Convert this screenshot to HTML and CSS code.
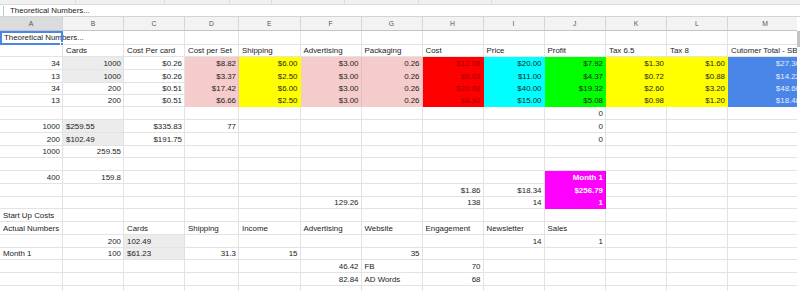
FILE: index.html
```html
<!DOCTYPE html>
<html>
<head>
<meta charset="utf-8">
<link rel="stylesheet" href="styles.css">
</head>
<body>
<div class="toolbar"><span style="width:75px"></span><span style="width:88px"></span><span style="width:64px"></span><span style="width:41px"></span><span style="width:72px"></span><span style="width:73px"></span><span style="width:72px"></span></div>
<div class="fbar"><span class="fx"></span><span class="ftext">Theoretical Numbers...</span></div>
<table class="sheet">
<colgroup>
<col style="width:63px"><col style="width:61px"><col style="width:61px"><col style="width:54px"><col style="width:61.5px"><col style="width:61px"><col style="width:61px"><col style="width:61px"><col style="width:61px"><col style="width:61.5px"><col style="width:61px"><col style="width:61px"><col style="width:75px">
</colgroup>
<thead>
<tr class="hdr"><th class="hsel">A</th><th>B</th><th>C</th><th>D</th><th>E</th><th>F</th><th>G</th><th>H</th><th>I</th><th>J</th><th>K</th><th>L</th><th>M</th></tr>
</thead>
<tbody>
<tr class="h14"><td class="sel">Theoretical Numbers...</td><td></td><td></td><td></td><td></td><td></td><td></td><td></td><td></td><td></td><td></td><td></td><td></td></tr>
<tr class="h12"><td></td><td>Cards</td><td>Cost Per card</td><td>Cost per Set</td><td>Shipping</td><td>Advertising</td><td>Packaging</td><td>Cost</td><td>Price</td><td>Profit</td><td>Tax 6.5</td><td>Tax 8</td><td>Cutomer Total - SB</td></tr>
<tr class="h13"><td class="n">34</td><td class="n gr">1000</td><td class="n">$0.26</td><td class="n pk">$8.82</td><td class="n yl">$6.00</td><td class="n pk">$3.00</td><td class="n pk">0.26</td><td class="n rd">$12.08</td><td class="n cy">$20.00</td><td class="n gn">$7.92</td><td class="n yl">$1.30</td><td class="n yl">$1.60</td><td class="n bl">$27.30</td></tr>
<tr class="h13"><td class="n">13</td><td class="n gr">1000</td><td class="n">$0.26</td><td class="n pk">$3.37</td><td class="n yl">$2.50</td><td class="n pk">$3.00</td><td class="n pk">0.26</td><td class="n rd">$6.63</td><td class="n cy">$11.00</td><td class="n gn">$4.37</td><td class="n yl">$0.72</td><td class="n yl">$0.88</td><td class="n bl">$14.22</td></tr>
<tr class="h12"><td class="n">34</td><td class="n">200</td><td class="n">$0.51</td><td class="n pk">$17.42</td><td class="n yl">$6.00</td><td class="n pk">$3.00</td><td class="n pk">0.26</td><td class="n rd">$20.68</td><td class="n cy">$40.00</td><td class="n gn">$19.32</td><td class="n yl">$2.60</td><td class="n yl">$3.20</td><td class="n bl">$48.60</td></tr>
<tr class="h12"><td class="n">13</td><td class="n">200</td><td class="n">$0.51</td><td class="n pk">$6.66</td><td class="n yl">$2.50</td><td class="n pk">$3.00</td><td class="n pk">0.26</td><td class="n rd">$8.92</td><td class="n cy">$15.00</td><td class="n gn">$5.08</td><td class="n yl">$0.98</td><td class="n yl">$1.20</td><td class="n bl">$18.48</td></tr>
<tr class="h13"><td></td><td></td><td></td><td></td><td></td><td></td><td></td><td></td><td></td><td class="n">0</td><td></td><td></td><td></td></tr>
<tr class="h13"><td class="n">1000</td><td class="gr">$259.55</td><td class="n">$335.83</td><td class="n">77</td><td></td><td></td><td></td><td></td><td></td><td class="n">0</td><td></td><td></td><td></td></tr>
<tr class="h13"><td class="n">200</td><td class="gr">$102.49</td><td class="n">$191.75</td><td></td><td></td><td></td><td></td><td></td><td></td><td class="n">0</td><td></td><td></td><td></td></tr>
<tr class="h12"><td class="n">1000</td><td class="n">259.55</td><td></td><td></td><td></td><td></td><td></td><td></td><td></td><td></td><td></td><td></td><td></td></tr>
<tr class="h13"><td></td><td></td><td></td><td></td><td></td><td></td><td></td><td></td><td></td><td></td><td></td><td></td><td></td></tr>
<tr class="h13"><td class="n">400</td><td class="n">159.8</td><td></td><td></td><td></td><td></td><td></td><td></td><td></td><td class="n mg">Month 1</td><td></td><td></td><td></td></tr>
<tr class="h13"><td></td><td></td><td></td><td></td><td></td><td></td><td></td><td class="n">$1.86</td><td class="n">$18.34</td><td class="n mg">$256.79</td><td></td><td></td><td></td></tr>
<tr class="h12"><td></td><td></td><td></td><td></td><td></td><td class="n">129.26</td><td></td><td class="n">138</td><td class="n">14</td><td class="n mg">1</td><td></td><td></td><td></td></tr>
<tr class="h13"><td>Start Up Costs</td><td></td><td></td><td></td><td></td><td></td><td></td><td></td><td></td><td></td><td></td><td></td><td></td></tr>
<tr class="h13"><td>Actual Numbers</td><td></td><td>Cards</td><td>Shipping</td><td>Income</td><td>Advertising</td><td>Website</td><td>Engagement</td><td>Newsletter</td><td>Sales</td><td></td><td></td><td></td></tr>
<tr class="h13"><td></td><td class="n">200</td><td class="gr">102.49</td><td></td><td></td><td></td><td></td><td></td><td class="n">14</td><td class="n">1</td><td></td><td></td><td></td></tr>
<tr class="h12"><td>Month 1</td><td class="n">100</td><td class="gr">$61.23</td><td class="n">31.3</td><td class="n">15</td><td></td><td class="n">35</td><td></td><td></td><td></td><td></td><td></td><td></td></tr>
<tr class="h13"><td></td><td></td><td></td><td></td><td></td><td class="n">46.42</td><td>FB</td><td class="n">70</td><td></td><td></td><td></td><td></td><td></td></tr>
<tr class="h13"><td></td><td></td><td></td><td></td><td></td><td class="n">82.84</td><td>AD Words</td><td class="n">68</td><td></td><td></td><td></td><td></td><td></td></tr>
<tr class="h13"><td></td><td></td><td></td><td></td><td></td><td></td><td></td><td></td><td></td><td></td><td></td><td></td><td></td></tr>
</tbody>
</table>
<div class="vscroll"><div class="thumb"></div></div>
</body>
</html>
```
FILE: styles.css
```css
html, body {
  margin: 0;
  padding: 0;
}
body {
  width: 800px;
  height: 291px;
  overflow: hidden;
  position: relative;
  background: #fff;
  font-family: "Liberation Sans", Arial, sans-serif;
  color: #1c1c1c;
}
.toolbar {
  height: 4px;
  background: #f1f1f1;
  border-bottom: 1px solid #dadada;
  display: flex;
}
.toolbar span {
  height: 4px;
  border-right: 1px solid #dcdcdc;
  flex: none;
}
.fbar {
  height: 11px;
  border-bottom: 1px solid #d4d4d4;
  display: flex;
  align-items: center;
  font-size: 7.9px;
  color: #1c1c1c;
}
.fx {
  width: 1px;
  height: 10px;
  background: #c8c8c8;
  margin-left: 3px;
}
.ftext {
  margin-left: 6px;
  white-space: nowrap;
}
.sheet {
  border-collapse: separate;
  border-spacing: 0;
  table-layout: fixed;
  width: 803px;
}
.sheet th {
  height: 14px;
  padding: 0;
  background: #f3f3f3;
  border-right: 1px solid #d6d6d6;
  border-bottom: 1px solid #c4c4c4;
  font-size: 6.8px;
  font-weight: normal;
  color: #555;
  text-align: center;
  vertical-align: middle;
  box-sizing: border-box;
}
.sheet th.hsel {
  background: #dcdcdc;
}
.sheet td {
  padding: 0 2px 0 3px;
  border-right: 1px solid #e3e3e3;
  border-bottom: 1px solid #e3e3e3;
  font-size: 7.9px;
  line-height: 9px;
  white-space: nowrap;
  overflow: visible;
  vertical-align: middle;
  text-align: left;
  box-sizing: border-box;
}
.h14 { height: 14px; }
.h13 { height: 13px; }
.h12 { height: 12px; }
.sheet td.n { text-align: right; }
.sheet td.gr { background: #ececec; border-right-color: #e0e0e0; }
.sheet td.pk { background: #f4cccc; border-bottom-color: #f4cccc; border-right-color: #e6bcbc; }
.sheet td.yl { background: #ffff00; border-bottom-color: #ffff00; border-right-color: #ffff00; }
.sheet td.rd { background: #ff0000; border-bottom-color: #ff0000; border-right-color: #ff0000; color: #a30000; }
.sheet td.cy { background: #00ffff; border-bottom-color: #00ffff; border-right-color: #00ffff; }
.sheet td.gn { background: #00ff00; border-bottom-color: #00ff00; border-right-color: #00ff00; }
.sheet td.bl { background: #4a86e8; border-bottom-color: #4a86e8; border-right-color: #4a86e8; color: #e6edfb; }
.sheet td.mg { background: #ff00ff; border-bottom-color: #ff00ff; border-right-color: #d600d6; color: #fff; font-weight: bold; }
.sheet td.sel {
  position: relative;
  outline: 2px solid #4a86e8;
  outline-offset: -2px;
  padding-left: 4px;
}
.sheet td.sel::after {
  content: "";
  position: absolute;
  right: -2px;
  bottom: -2px;
  width: 4px;
  height: 4px;
  background: #4a86e8;
  border: 1px solid #fff;
  box-sizing: border-box;
}
.vscroll {
  position: absolute;
  top: 17px;
  right: 0;
  width: 3px;
  bottom: 0;
  background: #fff;
}
.thumb {
  position: absolute;
  top: 14px;
  left: 0;
  width: 3px;
  height: 16px;
  background: #c4c4c4;
}
```
